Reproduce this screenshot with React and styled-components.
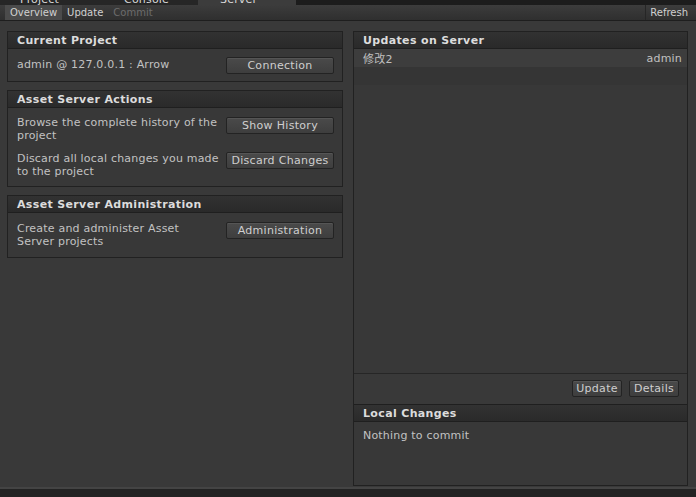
import React from "react";
import styled, { createGlobalStyle } from "styled-components";

const Global = createGlobalStyle`
  html, body { margin: 0; padding: 0; background: #232323; }
  body { font-family: "DejaVu Sans", Verdana, sans-serif; }
  * { box-sizing: border-box; }
`;

const Window = styled.div`
  width: 696px;
  height: 497px;
  display: flex;
  flex-direction: column;
  background: #232323;
  overflow: hidden;
  font-size: 11px;
  letter-spacing: 0.2px;
  color: #c4c4c4;
`;

const TabStrip = styled.div`
  height: 5px;
  overflow: hidden;
  background: #1c1c1c;
  display: flex;
  flex-shrink: 0;
`;

const Tab = styled.div`
  width: ${(p) => p.$w}px;
  height: 5px;
  line-height: 0px;
  padding-left: ${(p) => p.$pl}px;
  color: #d8d8d8;
  background: ${(p) => (p.$active ? "#3c3c3c" : "#262626")};
  font-size: 11px;
  white-space: nowrap;
`;

const Toolbar = styled.div`
  height: 16px;
  flex-shrink: 0;
  display: flex;
  align-items: stretch;
  padding: 0 4px 0 5px;
  background: linear-gradient(#3c3c3c, #2f2f2f);
  border-bottom: 1px solid #1e1e1e;
`;

const ToolButton = styled.div`
  display: flex;
  align-items: center;
  padding: 0 ${(p) => p.$px || 5}px;
  font-size: 10px;
  letter-spacing: 0;
  color: ${(p) => (p.$disabled ? "#6c6c6c" : "#d0d0d0")};
  background: ${(p) => (p.$active ? "#4b4b4b" : "transparent")};
  border-left: ${(p) => (p.$sep ? "1px solid #262626" : "none")};
`;

const Spacer = styled.div`
  flex: 1;
`;

const Main = styled.div`
  height: 468px;
  flex-shrink: 0;
  background: #393939;
  border-bottom: 2px solid #444;
  display: grid;
  grid-template-columns: 336px 335px;
  column-gap: 10px;
  padding: 10px 8px 0 7px;
  align-items: start;
`;

const Column = styled.div`
  display: flex;
  flex-direction: column;
  gap: 8px;
`;

const Panel = styled.div`
  border: 1px solid #212121;
  background: #383838;
  display: flex;
  flex-direction: column;
  height: ${(p) => (p.$h ? `${p.$h}px` : "auto")};
`;

const Header = styled.div`
  height: ${(p) => (p.$topLine ? 18 : 17)}px;
  flex-shrink: 0;
  display: flex;
  align-items: center;
  padding-left: 9px;
  font-weight: bold;
  font-size: 11px;
  letter-spacing: 0.35px;
  color: #dcdcdc;
  background: linear-gradient(#323232, #2a2a2a);
  border-bottom: 1px solid #1f1f1f;
  border-top: ${(p) => (p.$topLine ? "1px solid #1f1f1f" : "none")};
`;

const Body = styled.div`
  display: flex;
  flex-direction: column;
  gap: 10px;
  padding: ${(p) => p.$pad || "8px 8px 8px 9px"};
`;

const Row = styled.div`
  display: flex;
  justify-content: space-between;
  align-items: flex-start;
`;

const Desc = styled.div`
  width: ${(p) => p.$w || 206}px;
  line-height: 13px;
  color: #c2c2c2;
  padding-top: ${(p) => p.$pt || 0}px;
`;

const Button = styled.div`
  width: ${(p) => p.$w || 108}px;
  height: 17px;
  flex-shrink: 0;
  display: flex;
  align-items: center;
  justify-content: center;
  margin-top: ${(p) => p.$mt || 0}px;
  font-size: 11px;
  letter-spacing: 0.3px;
  color: #cfcfcf;
  border: 1px solid #232323;
  border-radius: 2px;
  background: linear-gradient(#4a4a4a, #3e3e3e);
  box-shadow: inset 0 1px 0 #555;
  white-space: nowrap;
`;

const List = styled.div`
  height: 325px;
  flex-shrink: 0;
  display: flex;
  flex-direction: column;
  background: #383838;
  border-bottom: 1px solid #262626;
`;

const ListRow = styled.div`
  height: 18px;
  display: flex;
  align-items: center;
  justify-content: space-between;
  padding: 0 5px 0 9px;
  background: ${(p) => p.$bg};
  color: #c0c0c0;
  font-family: "DejaVu Sans", "Noto Sans CJK SC", sans-serif;
`;

const ButtonBar = styled.div`
  height: 30px;
  flex-shrink: 0;
  display: flex;
  justify-content: flex-end;
  align-items: flex-start;
  gap: 7px;
  padding: 6px 8px 0 0;
  background: #393939;
`;

const LocalBody = styled.div`
  height: 63px;
  flex-shrink: 0;
  padding: 7px 9px;
  color: #c2c2c2;
`;

export default function App() {
  return (
    <>
      <Global />
      <Window>
        <TabStrip>
          <Tab $w={112} $pl={20}>Project</Tab>
          <Tab $w={86} $pl={12}>Console</Tab>
          <Tab $w={98} $pl={22} $active>Server</Tab>
        </TabStrip>
        <Toolbar>
          <ToolButton $active>Overview</ToolButton>
          <ToolButton>Update</ToolButton>
          <ToolButton $disabled>Commit</ToolButton>
          <Spacer />
          <ToolButton $sep $px={4}>Refresh</ToolButton>
        </Toolbar>
        <Main>
          <Column>
            <Panel>
              <Header>Current Project</Header>
              <Body $pad="8px 8px 7px 9px">
                <Row>
                  <Desc $pt={1}>admin @ 127.0.0.1 : Arrow</Desc>
                  <Button>Connection</Button>
                </Row>
              </Body>
            </Panel>
            <Panel>
              <Header>Asset Server Actions</Header>
              <Body>
                <Row>
                  <Desc>Browse the complete history of the project</Desc>
                  <Button $mt={1}>Show History</Button>
                </Row>
                <Row>
                  <Desc>Discard all local changes you made to the project</Desc>
                  <Button>Discard Changes</Button>
                </Row>
              </Body>
            </Panel>
            <Panel>
              <Header>Asset Server Administration</Header>
              <Body $pad="8px 8px 9px 9px">
                <Row>
                  <Desc $w={190} $pt={1}>Create and administer Asset Server projects</Desc>
                  <Button $mt={1}>Administration</Button>
                </Row>
              </Body>
            </Panel>
          </Column>
          <Column>
            <Panel $h={455}>
              <Header>Updates on Server</Header>
              <List>
                <ListRow $bg="#3d3d3d">
                  <span>修改2</span>
                  <span>admin</span>
                </ListRow>
                <ListRow $bg="#353535" />
              </List>
              <ButtonBar>
                <Button $w={50}>Update</Button>
                <Button $w={50}>Details</Button>
              </ButtonBar>
              <Header $topLine>Local Changes</Header>
              <LocalBody>Nothing to commit</LocalBody>
            </Panel>
          </Column>
        </Main>
      </Window>
    </>
  );
}
